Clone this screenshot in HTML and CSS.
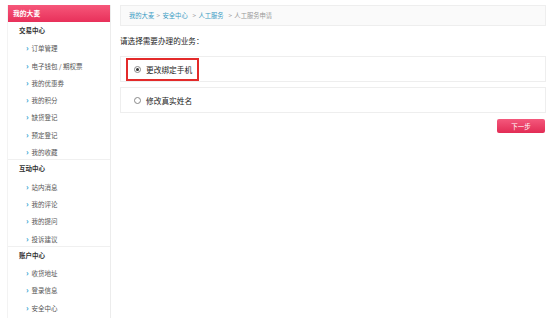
FILE: index.html
```html
<!DOCTYPE html>
<html lang="zh">
<head>
    <meta charset="UTF-8">
    <title>人工服务申请</title>
    <link rel="stylesheet" href="styles.css">
</head>
<body>
    <div class="page">
        <!-- 左侧菜单 -->
        <div class="sidebar">
            <div class="side-title">我的大麦</div>
            <div class="side-group">交易中心</div>
            <a class="side-item">订单管理</a>
            <a class="side-item">电子钱包 / 期权票</a>
            <a class="side-item">我的优惠券</a>
            <a class="side-item">我的积分</a>
            <a class="side-item">缺货登记</a>
            <a class="side-item">预定登记</a>
            <a class="side-item">我的收藏</a>
            <div class="side-group">互动中心</div>
            <a class="side-item">站内消息</a>
            <a class="side-item">我的评论</a>
            <a class="side-item">我的提问</a>
            <a class="side-item">投诉建议</a>
            <div class="side-group">账户中心</div>
            <a class="side-item">收货地址</a>
            <a class="side-item">登录信息</a>
            <a class="side-item">安全中心</a>
        </div>

        <div class="main">
            <div class="crumbs">
                <a>我的大麦</a> &gt; <a>安全中心</a> &nbsp;&gt; <a>人工服务</a> &nbsp;<span>&gt; 人工服务申请</span>
            </div>
            <div class="ask">请选择需要办理的业务：</div>
            <div class="option">
                <label class="choice selected"><span class="radio on"></span>更改绑定手机</label>
            </div>
            <div class="option">
                <label class="choice"><span class="radio"></span>修改真实姓名</label>
            </div>
            <div class="actions">
                <button class="next-btn">下一步</button>
            </div>
        </div>
    </div>
</body>
</html>
```

FILE: styles.css
```css
body {
    margin: 0;
    background: #fff;
    font-family: "Noto Sans CJK SC", "Noto Sans", sans-serif;
    color: #333;
    overflow: hidden;
}

.page {
    display: flex;
    align-items: flex-start;
    padding: 5px 3px 0 7px;
    gap: 9px;
}

.sidebar {
    width: 102px;
    flex-shrink: 0;
    border-right: 1px solid #ececec;
    border-left: 1px solid #f3f3f3;
    height: 330px;
    font-size: 6.5px;
}

.side-title {
    height: 17px;
    line-height: 17px;
    padding-left: 5px;
    color: #fff;
    font-weight: bold;
    font-size: 6.8px;
    background: linear-gradient(#f6577a, #e8305a);
}

.side-group {
    height: 17.3px;
    line-height: 17.3px;
    padding-left: 11px;
    font-weight: bold;
    color: #333;
    border-top: 1px solid #f0f0f0;
    margin-top: -1px;
}

.side-group:nth-child(2) {
    border-top: none;
    margin-top: 0;
}

.side-item {
    display: block;
    height: 17.3px;
    line-height: 17.3px;
    padding-left: 18px;
    color: #555;
}

.side-item::before {
    content: '›';
    color: #2aa1d3;
    font-weight: bold;
    font-size: 8px;
    margin-right: 3px;
}

.main {
    flex: 1;
}

.crumbs {
    height: 19px;
    line-height: 19px;
    padding-left: 8px;
    background: #fafafa;
    border: 1px solid #eee;
    font-size: 6.3px;
    color: #999;
    word-spacing: 1px;
}

.crumbs a {
    color: #3b9cc4;
}

.ask {
    margin-top: 7px;
    height: 15px;
    line-height: 15px;
    font-size: 7.6px;
    color: #222;
}

.option {
    margin-top: 8px;
    height: 24px;
    border: 1px solid #eee;
    display: flex;
    align-items: flex-start;
    padding-left: 5px;
}

.option + .option {
    margin-top: 5px;
}

.choice {
    display: flex;
    align-items: center;
    height: 19px;
    margin-top: 1px;
    padding: 0 5px 0 6px;
    font-size: 7.7px;
    color: #222;
    border: 2px solid transparent;
}

.choice.selected {
    border-color: #e32a2a;
}

.radio {
    width: 5px;
    height: 5px;
    border: 1px solid #888;
    border-radius: 50%;
    margin-right: 5px;
    position: relative;
}

.radio.on::after {
    content: '';
    position: absolute;
    top: 1px;
    left: 1px;
    width: 3px;
    height: 3px;
    border-radius: 50%;
    background: #333;
}

.actions {
    display: flex;
    justify-content: flex-end;
    margin-top: 6px;
    padding-right: 1px;
}

.next-btn {
    width: 48px;
    height: 14px;
    padding: 0;
    border: none;
    border-radius: 2px;
    background: linear-gradient(#f4587c, #e22c55);
    color: #fff;
    font-family: inherit;
    font-size: 6.5px;
    line-height: 14px;
}
```
